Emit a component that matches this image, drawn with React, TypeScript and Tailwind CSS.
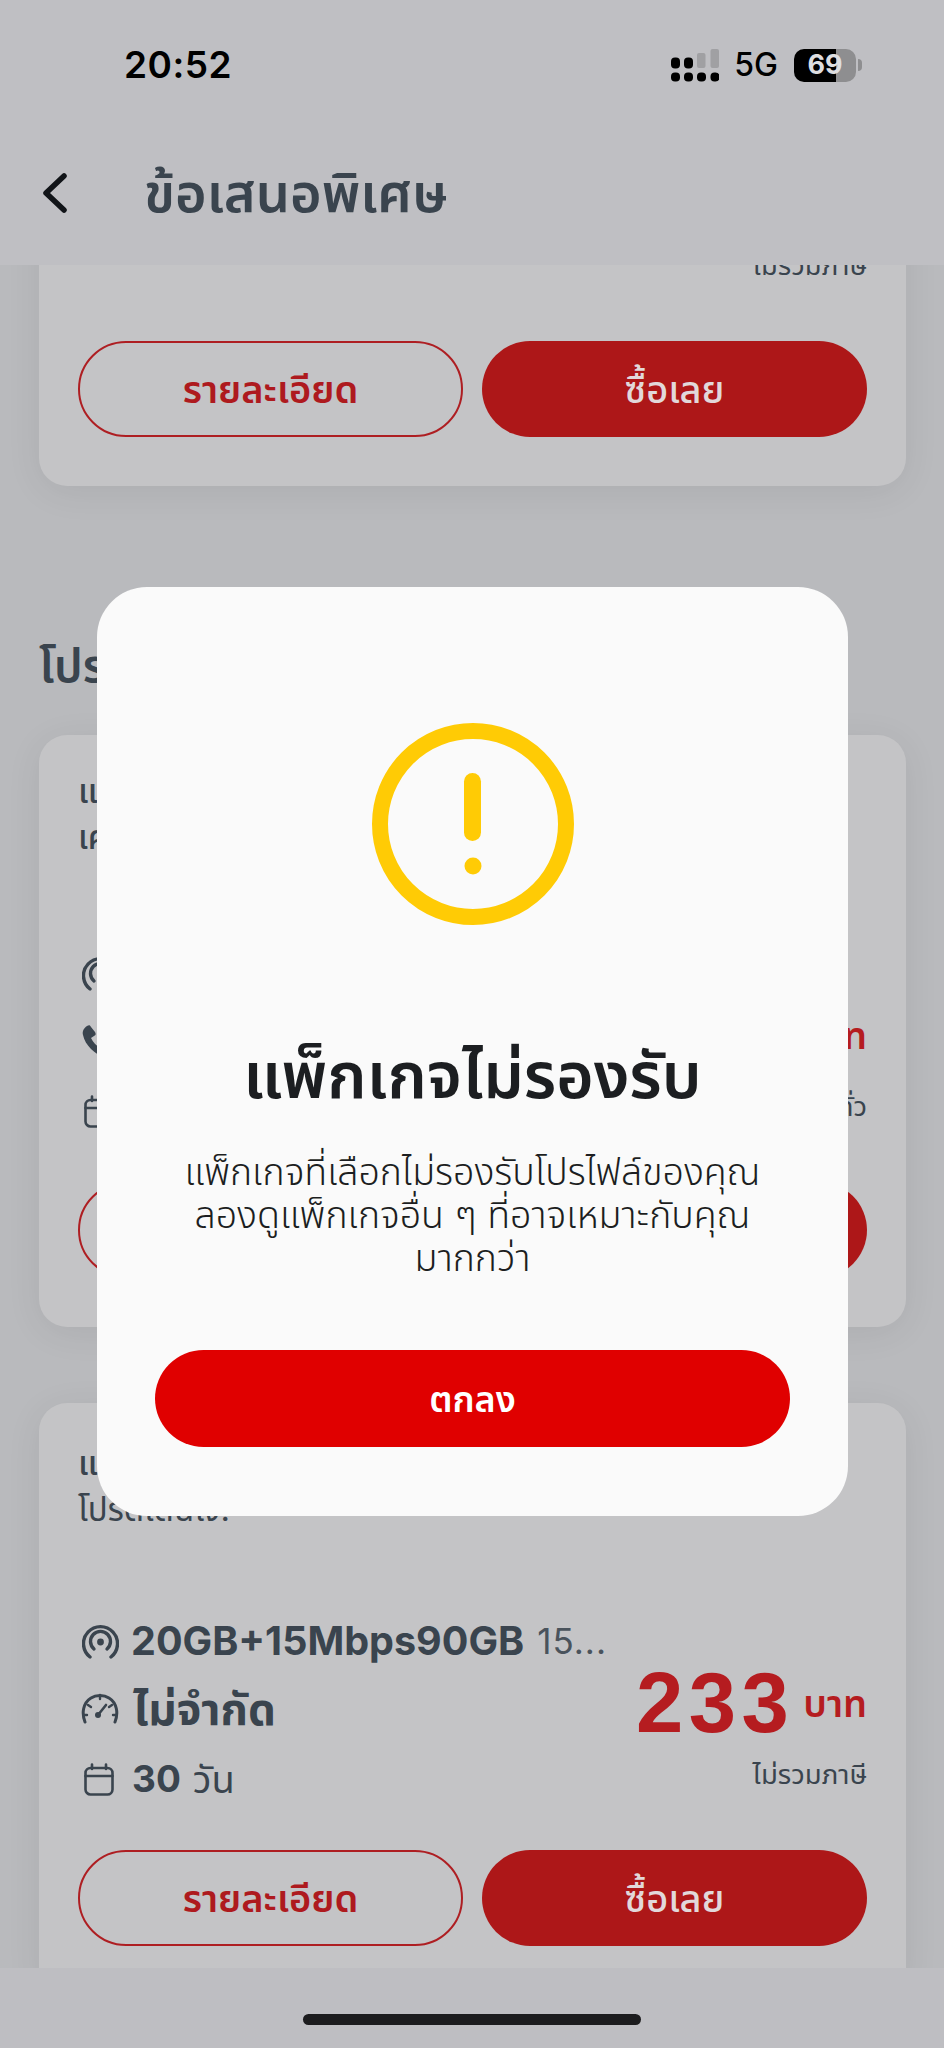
import React from "react";

const FONT = "[font-family:Inter,'Noto_Sans','Noto_Sans_Thai','Liberation_Sans',sans-serif]";

function Antenna() {
  return (
    <svg viewBox="0 0 37 35" className="w-[37px] h-[35px] shrink-0" fill="none" stroke="#3a444e" strokeWidth="3.4" strokeLinecap="round">
      <path d="M8 33 A 17 17 0 1 1 29 33" />
      <path d="M12 25 A 10 10 0 1 1 25 25" />
      <circle cx="18.5" cy="18" r="3.4" fill="#3a444e" stroke="none" />
    </svg>
  );
}

function Gauge() {
  return (
    <svg viewBox="0 0 38 32" className="w-[38px] h-[32px] shrink-0" fill="none" stroke="#3a444e" strokeWidth="3" strokeLinecap="round">
      <path d="M4 29 C 0.5 20 2 10 10 5 C 15 1.5 23 1.5 28 5 C 36 10 37.5 20 34 29" />
      <path d="M19 2 V6 M7 12 L10 14 M31 12 L28 14 M3 22 H6 M35 22 H32" strokeWidth="2.4" />
      <path d="M17 22 L25 12" strokeWidth="2.6" />
      <circle cx="17" cy="22" r="3" fill="#3a444e" stroke="none" />
    </svg>
  );
}

function Calendar() {
  return (
    <svg viewBox="0 0 30 33" className="w-[30px] h-[33px] shrink-0" fill="none" stroke="#3a444e" strokeWidth="2.6" strokeLinecap="round">
      <rect x="1.5" y="5" width="27" height="26.5" rx="5" />
      <path d="M1.5 13 H28.5 M8 1.5 V6 M22 1.5 V6" />
    </svg>
  );
}

function Phone() {
  return (
    <svg viewBox="0 0 36 36" className="w-[36px] h-[36px] shrink-0" fill="#3a444e">
      <path d="M6 3 C3 5 1 8 2 12 C4 22 14 32 24 34 C28 35 31 33 33 30 C34 28 34 27 32 26 L26 22 C24 21 23 21 22 23 L20 25 C15 23 12 19 10 15 L13 13 C15 12 15 11 14 9 L10 4 C9 2 8 2 6 3 Z" />
    </svg>
  );
}

function Chevron() {
  return (
    <svg viewBox="0 0 26 40" className="w-[26px] h-[40px]" fill="none" stroke="#111418" strokeWidth="5.5" strokeLinecap="round" strokeLinejoin="round">
      <path d="M22 3 L4 20 L22 37" />
    </svg>
  );
}

function Signal() {
  const dots = [
    [4.5, 28], [17.5, 28], [30.5, 28], [44, 28],
    [4.5, 13], [17.5, 13],
  ];
  return (
    <svg viewBox="0 0 48 33" className="w-[48px] h-[33px]">
      {dots.map(([x, y], i) => (
        <rect key={i} x={x - 4.5} y={y - 4.5} width="9" height={y === 13 ? 11 : 9} rx="4" fill="#000" />
      ))}
      <rect x="26" y="4" width="8.5" height="15" rx="2" fill="#a0a0a3" />
      <rect x="39.5" y="0" width="8.5" height="19" rx="2" fill="#a0a0a3" />
    </svg>
  );
}

function Card({
  line1,
  line2,
  line2Weight,
  row2,
  row2Icon,
  note,
  compactTop,
  showDuration,
}: {
  line1: string;
  line2: string;
  line2Weight: string;
  row2: string;
  row2Icon: React.ReactNode;
  note: string;
  compactTop: boolean;
  showDuration: boolean;
}) {
  return (
    <div className="w-[867px] h-[592px] shrink-0 flex flex-col px-[39px] rounded-[28px] bg-[#c4c4c6] shadow-[0_6px_36px_rgba(0,0,0,0.07)]">
      <div className={compactTop ? "pt-[33px] h-[203px] text-[#3a444e]" : "pt-[37px] h-[203px] text-[#3a444e]"}>
        <div className="text-[34px] leading-[46px] font-medium whitespace-nowrap">{line1}</div>
        <div className={`text-[33px] leading-[46px] whitespace-nowrap ${line2Weight}`}>{line2}</div>
      </div>
      <div className="flex justify-between h-[244px]">
        <div className="flex flex-col text-[#3a444e]">
          <div className="h-[68px] flex items-center gap-[13px] pl-[4px] pt-[3px]">
            <Antenna />
            <span className="text-[39.5px] font-bold whitespace-nowrap -ml-[1px]">20GB+15Mbps90GB</span>
            <span className="text-[35px] tracking-[1px] whitespace-nowrap text-[#4a535c]">15...</span>
          </div>
          <div className="h-[70px] flex items-center gap-[14px] pl-[3px]">
            {row2Icon}
            <span className="text-[44px] font-bold whitespace-nowrap">{row2}</span>
          </div>
          {showDuration && (
            <div className="h-[70px] flex items-center gap-[18px] pl-[6px]">
              <Calendar />
              <span className="text-[37px] font-bold">30</span>
              <span className="text-[38px] -ml-[6px]">วัน</span>
            </div>
          )}
        </div>
        <div className="flex flex-col items-end pt-[54px]">
          <div className="flex items-center gap-[9px] h-[86px]">
            <span className="text-[85px] leading-[86px] font-bold tracking-[5.5px] text-[#b51c20] [font-family:'Liberation_Sans',sans-serif]">233</span>
            <span className="text-[38px] leading-[50px] font-semibold text-[#b51c20]">บาท</span>
          </div>
          <div className="mt-[12px] text-[27.5px] leading-[32px] text-[#3a444e] whitespace-nowrap">{note}</div>
        </div>
      </div>
      <div className="flex gap-[19px]">
        <div className="w-[385px] h-[96px] shrink-0 rounded-full border-[2.5px] border-[#ae1e22] flex items-center justify-center text-[38px] font-semibold text-[#ae1a1e]">
          รายละเอียด
        </div>
        <div className="w-[385px] h-[96px] shrink-0 rounded-full bg-[#ad1718] flex items-center justify-center text-[38px] font-medium text-[#e2d8da]">
          ซื้อเลย
        </div>
      </div>
    </div>
  );
}

export default function App() {
  return (
    <div className={`relative w-[944px] h-[2048px] overflow-hidden flex flex-col bg-[#b9babd] ${FONT}`}>
      <header className="h-[265px] shrink-0 bg-[#bfbfc3] flex flex-col z-10">
        <div className="flex items-center justify-between h-[130px] pl-[124px] pr-[82px]">
          <span className="text-[37px] font-semibold text-black tracking-[0.5px]">20:52</span>
          <div className="flex items-center">
            <Signal />
            <span className="ml-[15px] text-[32px] font-medium text-black">5G</span>
            <div className="ml-[16px] w-[62px] h-[33px] rounded-[10px] bg-[linear-gradient(90deg,#000_0,#000_68%,#8e8e90_68%,#8e8e90_100%)] flex items-center justify-center text-[27px] font-bold text-[#dedee0]">
              69
            </div>
            <div className="ml-[2px] w-[4px] h-[12px] rounded-r-full bg-[#8e8e90]" />
          </div>
        </div>
        <div className="flex items-center h-[125px] pl-[42px]">
          <Chevron />
          <span className="ml-[76px] text-[54px] font-semibold text-[#3a444e] whitespace-nowrap">ข้อเสนอพิเศษ</span>
        </div>
      </header>

      <main className="flex-1 min-h-0 overflow-hidden pl-[39px]">
        <div className="-mt-[371px] flex flex-col">
          <Card
            compactTop={false}
            showDuration={false}
            line1="แพ็กเกจเสริม"
            line2="เน็ตเต็มสปีด"
            line2Weight=""
            row2=""
            row2Icon={null}
            note="ไม่รวมภาษี"
          />
          <h2 className="mt-[149px] text-[46px] leading-[60px] font-semibold text-[#3a444e] whitespace-nowrap h-[60px]">โปรโมชันแนะนำ</h2>
          <div className="mt-[40px]">
            <Card
              compactTop
              showDuration
              line1="แพ็กเกจเน็ตเต็มสปีด"
              line2="เคลมสิทธิ์ได้เลย"
              line2Weight="font-medium"
              row2="โทรทุกเครือข่าย"
              row2Icon={<Phone />}
              note="โทรได้ทั่ว"
            />
          </div>
          <div className="mt-[76px]">
            <Card
              compactTop={false}
              showDuration
              line1="แพ็กเกจเน็ตเต็มสปีด"
              line2="โปรดีเดินไง!"
              line2Weight=""
              row2="ไม่จำกัด"
              row2Icon={<Gauge />}
              note="ไม่รวมภาษี"
            />
          </div>
        </div>
      </main>

      <footer className="h-[80px] shrink-0 bg-[#bebec2] z-10 flex justify-center pt-[46px]">
        <div className="w-[338px] h-[11px] rounded-full bg-[#1c1c1e]" />
      </footer>

      <div className="absolute left-[97px] top-[587px] z-20 w-[751px] h-[929px] rounded-[50px] bg-[#fafafa] flex flex-col items-center">
        <svg viewBox="0 0 202 202" className="w-[202px] h-[202px] mt-[136px] shrink-0" fill="none">
          <circle cx="101" cy="101" r="93" stroke="#ffcb05" strokeWidth="16" />
          <rect x="92" y="50" width="17" height="68" rx="8.5" fill="#ffcb05" />
          <circle cx="101" cy="143" r="8.5" fill="#ffcb05" />
        </svg>
        <div className="mt-[114px] text-[64px] leading-[72px] font-semibold text-[#1c1e21] whitespace-nowrap">แพ็กเกจไม่รองรับ</div>
        <div className="mt-[39px] w-[680px] text-center text-[37.5px] leading-[43px] font-light text-[#1c1e21]">
          <div>แพ็กเกจที่เลือกไม่รองรับโปรไฟล์ของคุณ</div>
          <div>ลองดูแพ็กเกจอื่น ๆ ที่อาจเหมาะกับคุณ</div>
          <div>มากกว่า</div>
        </div>
        <div className="mt-[71px] w-[635px] h-[97px] shrink-0 rounded-full bg-[#e00000] flex items-center justify-center text-[36px] font-semibold text-white">
          ตกลง
        </div>
      </div>
    </div>
  );
}
